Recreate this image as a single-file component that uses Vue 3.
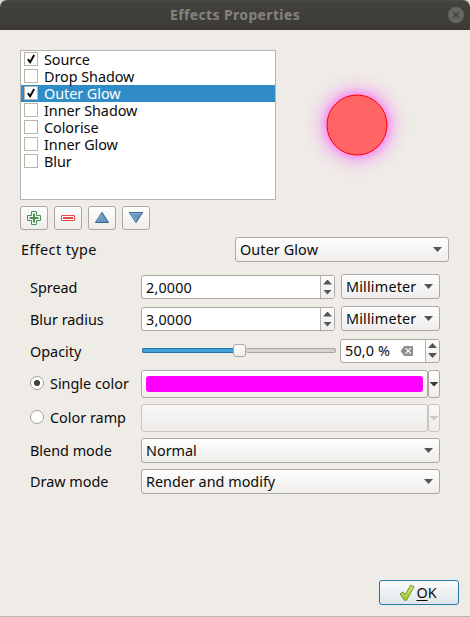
<script setup>
import { ref } from 'vue'

const effects = ref([
  { name: 'Source', on: true },
  { name: 'Drop Shadow', on: false },
  { name: 'Outer Glow', on: true, selected: true },
  { name: 'Inner Shadow', on: false },
  { name: 'Colorise', on: false },
  { name: 'Inner Glow', on: false },
  { name: 'Blur', on: false }
])
const lengths = [
  { label: 'Spread', value: '2,0000', unit: 'Millimeter' },
  { label: 'Blur radius', value: '3,0000', unit: 'Millimeter' }
]
const modes = [
  { label: 'Blend mode', value: 'Normal' },
  { label: 'Draw mode', value: 'Render and modify' }
]
</script>

<template>
  <div class="window">
    <header class="titlebar">
      <span class="title">Effects Properties</span>
      <svg class="close" width="16" height="16" viewBox="0 0 16 16">
        <circle cx="8" cy="8" r="8" fill="#66655f" />
        <path d="M5.2 5.2l5.6 5.6M10.8 5.2l-5.6 5.6" stroke="#3b3a36" stroke-width="1.3" />
      </svg>
    </header>

    <section class="top">
      <ul class="list">
        <li v-for="e in effects" :key="e.name" :class="{ selected: e.selected }">
          <span class="check">
            <svg v-if="e.on" width="12" height="12" viewBox="0 0 12 12">
              <path d="M2.8 6.1l2.3 3.1L9.2 2" fill="none" stroke="#000" stroke-width="1.9" />
            </svg>
          </span>
          <span>{{ e.name }}</span>
        </li>
      </ul>
      <svg class="preview" width="120" height="120" viewBox="0 0 120 120">
        <defs>
          <radialGradient id="glow">
            <stop offset="0.53" stop-color="#ff00ff" stop-opacity="0.42" />
            <stop offset="0.6" stop-color="#ff00ff" stop-opacity="0.28" />
            <stop offset="0.7" stop-color="#ff00ff" stop-opacity="0.12" />
            <stop offset="0.82" stop-color="#ff00ff" stop-opacity="0.035" />
            <stop offset="1" stop-color="#ff00ff" stop-opacity="0" />
          </radialGradient>
        </defs>
        <circle cx="60" cy="60" r="54" fill="url(#glow)" />
        <circle cx="60" cy="60" r="30" fill="#ff6565" stroke="#ff0000" />
      </svg>
    </section>

    <nav class="tools">
      <button class="tool">
        <svg width="16" height="16" viewBox="0 0 16 16">
          <path d="M5.5 1.5h5v4h4v5h-4v4h-5v-4h-4v-5h4z" fill="#f4faf4" stroke="#4f8f56" />
          <path d="M8 3.5v9M3.5 8h9" stroke="#4f8f56" stroke-width="2" />
        </svg>
      </button>
      <button class="tool">
        <svg width="16" height="16" viewBox="0 0 16 16">
          <path d="M1.5 5.5h13v5h-13z" fill="#fff" stroke="#ee4848" />
          <path d="M3 8h10" stroke="#ee4848" stroke-width="2" />
        </svg>
      </button>
      <button class="tool">
        <svg width="16" height="16" viewBox="0 0 16 16">
          <path d="M8 2.3L14.5 12.5h-13z" fill="#6795c5" stroke="#355f88" />
          <path d="M8 3.6L3 11.6" stroke="#9dbddd" stroke-width=".8" />
        </svg>
      </button>
      <button class="tool">
        <svg width="16" height="16" viewBox="0 0 16 16">
          <path d="M8 12.7L14.5 2.5h-13z" fill="#6795c5" stroke="#355f88" />
          <path d="M3 3.4h10M3 3.4l5 8" fill="none" stroke="#9dbddd" stroke-width=".8" />
        </svg>
      </button>
    </nav>

    <div class="type-row">
      <label class="type-label">Effect type</label>
      <div class="combo type-combo"><span>Outer Glow</span><i class="down"></i></div>
    </div>

    <section class="form">
      <div v-for="l in lengths" :key="l.label" class="row length">
        <label>{{ l.label }}</label>
        <div class="spin">
          <span class="value">{{ l.value }}</span>
          <span class="steps"><i class="up"></i><i class="down"></i></span>
        </div>
        <div class="combo unit"><span>{{ l.unit }}</span><i class="down"></i></div>
      </div>

      <div class="row opacity">
        <label>Opacity</label>
        <div class="slider">
          <span class="filled"></span><span class="handle"></span><span class="rest"></span>
        </div>
        <div class="spin percent">
          <span class="value">50,0 %</span>
          <svg class="clear" width="14" height="12" viewBox="0 0 14 12">
            <path d="M4.2 1H13v10H4.2L.6 6z" fill="#8f8f8d" />
            <path d="M5.5 3.2l5.4 5.4M10.9 3.2L5.5 8.6" stroke="#fff" stroke-width="1.2" />
          </svg>
          <span class="steps"><i class="up"></i><i class="down"></i></span>
        </div>
      </div>

      <div class="row color">
        <label class="choice"><span class="radio on"></span>Single color</label>
        <div class="well"><span class="swatch"></span></div>
        <div class="drop"><i class="down big"></i></div>
      </div>
      <div class="row color ramp">
        <label class="choice"><span class="radio"></span>Color ramp</label>
        <div class="well"></div>
        <div class="drop"><i class="down big"></i></div>
      </div>

      <div v-for="m in modes" :key="m.label" class="row mode">
        <label>{{ m.label }}</label>
        <div class="combo wide"><span>{{ m.value }}</span><i class="down"></i></div>
      </div>
    </section>

    <footer class="footer">
      <button class="ok">
        <svg width="16" height="18" viewBox="0 0 16 18">
          <defs>
            <linearGradient id="tick" x1="0" y1="0" x2="0" y2="1">
              <stop offset="0" stop-color="#d3e86c" />
              <stop offset="1" stop-color="#9fca32" />
            </linearGradient>
          </defs>
          <path d="M1 9.8l3.1-1.9 2 2.9L11.6 1.2l3.4 1.5L7.6 16.2H5.4z" fill="url(#tick)" stroke="#6b8f2a" stroke-width=".9" stroke-linejoin="round" />
        </svg>
        <span><span class="mnemonic">O</span>K</span>
      </button>
    </footer>
  </div>
</template>

<style>
body {
  margin: 0;
  background: #d5d3d0;
}
</style>

<style scoped>
* {
  box-sizing: border-box;
}
.window {
  width: 470px;
  height: 617px;
  display: flex;
  flex-direction: column;
  background: #efebe7;
  border-bottom: 1px solid #bab8b5;
  border-radius: 7px 7px 0 0;
  overflow: hidden;
  color: #0b0b0b;
  font: 14.4px/17px "Noto Sans", "Open Sans", sans-serif;
  white-space: nowrap;
}
.titlebar {
  flex: none;
  height: 30px;
  display: flex;
  align-items: center;
  padding: 0 6px 2px 170px;
  background: linear-gradient(#4b4a45, #42413c 3px, #3b3a36);
}
.title {
  color: #85837c;
  font-size: 14px;
  font-weight: 700;
  letter-spacing: 0.36px;
}
.close {
  margin: 2px 0 0 auto;
}
.top {
  flex: none;
  display: flex;
  padding: 20px 0 0 20px;
}
.list {
  width: 256px;
  height: 150px;
  margin: 0;
  padding: 0;
  list-style: none;
  background: #fff;
  border: 1px solid #b6b4b1;
}
.list li {
  display: flex;
  height: 17px;
  padding-left: 3px;
  gap: 6px;
  letter-spacing: -0.05px;
}
.list li.selected {
  background: #308cc6;
  color: #fff;
}
.check {
  width: 14px;
  height: 14px;
  margin-top: 1px;
  border: 1px solid #b8b5b2;
  background: #fff;
  display: flex;
}
.preview {
  margin: 15px 0 0 21px;
}
.tools {
  flex: none;
  display: flex;
  gap: 6px;
  padding: 6px 0 0 20px;
}
.tool,
.combo,
.well,
.drop {
  border: 1px solid #aaa7a4;
  border-radius: 3px;
  background: linear-gradient(#fefefe, #eeedeb);
}
.tool {
  width: 28px;
  height: 24px;
  padding: 0;
  display: flex;
  align-items: center;
  justify-content: center;
}
.type-row {
  flex: none;
  display: flex;
  align-items: center;
  padding: 7px 0 0 21px;
}
.type-label {
  width: 214px;
  letter-spacing: 0.4px;
}
.combo {
  height: 25px;
  display: flex;
  align-items: center;
  justify-content: space-between;
  padding: 0 6px 0 4px;
}
.type-combo {
  width: 214px;
  letter-spacing: 0.1px;
}
.down,
.up {
  width: 9px;
  height: 5px;
  background: #555;
  clip-path: polygon(0 0, 100% 0, 50% 100%);
}
.up {
  clip-path: polygon(50% 0, 100% 100%, 0 100%);
}
.form {
  display: flex;
  flex-direction: column;
  padding: 12px 0 0 30px;
}
.row {
  display: flex;
  align-items: center;
  height: 25px;
}
.row > label {
  flex: none;
  width: 111px;
}
.length {
  margin-bottom: 7px;
}
.length > label {
  padding-top: 1px;
}
.spin {
  width: 194px;
  height: 24px;
  display: flex;
  align-items: center;
  border: 1px solid #aaa7a4;
  border-radius: 3px;
  background: #fff;
  overflow: hidden;
}
.length .spin {
  margin: 1px 6px 0 0;
}
.value {
  flex: 1;
  padding-left: 4px;
  letter-spacing: 0.15px;
}
.steps {
  width: 14px;
  height: 22px;
  border-left: 1px solid #b4b1ae;
  background: linear-gradient(#fdfdfd, #efeeec);
  display: flex;
  flex-direction: column;
  align-items: center;
  justify-content: center;
  gap: 5px;
}
.unit {
  width: 99px;
  letter-spacing: 0.17px;
}
.wide {
  width: 299px;
}
.opacity > label {
  padding-top: 1px;
}
.slider {
  display: flex;
  align-items: center;
  width: 194px;
  margin: 0 4px 0 1px;
}
.filled,
.rest {
  height: 5px;
  border: 1px solid #aaa7a4;
  border-radius: 2px;
  background: #d5d3d0;
}
.filled {
  width: 91px;
  border-color: #2274a5;
  border-right: 0;
  background: #3fa0dc;
  border-radius: 2px 0 0 2px;
}
.rest {
  flex: 1;
  border-left: 0;
}
.handle {
  width: 13px;
  height: 13px;
  border: 1px solid #a8a5a2;
  border-radius: 3px;
  background: linear-gradient(#fff, #efeeec);
}
.percent {
  width: 100px;
}
.clear {
  margin-right: 11px;
}
.color {
  height: 28px;
  margin-top: 7px;
}
.ramp {
  margin-top: 6px;
}
.choice {
  display: flex;
  align-items: center;
  gap: 6px;
  padding-bottom: 2px;
}
.radio {
  width: 14px;
  height: 14px;
  border: 1px solid #a5a29f;
  border-radius: 50%;
  background: #fff;
}
.radio.on {
  background: radial-gradient(circle, #424242 2.7px, #fff 3.4px);
}
.well {
  width: 287px;
  height: 28px;
  padding: 5px 4px;
}
.swatch {
  display: block;
  height: 16px;
  border-radius: 3px;
  background: #ff00ff;
}
.drop {
  width: 12px;
  height: 28px;
  display: flex;
  align-items: center;
  justify-content: center;
}
.big {
  flex: none;
  width: 10px;
  height: 5px;
  background: #3b3b3b;
}
.ramp .well,
.ramp .drop {
  border-color: #c8c5c2;
  background: linear-gradient(#f9f8f7, #eeebe8);
}
.ramp .big {
  background: #cac8c6;
}
.mode {
  margin-top: 6px;
}
.footer {
  margin-top: auto;
  display: flex;
  justify-content: flex-end;
  padding: 0 11px 11px 0;
}
.ok {
  width: 80px;
  height: 25px;
  padding: 0 2px 0 0;
  display: flex;
  align-items: center;
  justify-content: center;
  gap: 1px;
  border: 1px solid #2577a8;
  border-radius: 3px;
  background: linear-gradient(#fcfdfe, #dfe5e9);
  color: inherit;
  font: inherit;
}
.mnemonic {
  text-decoration: underline;
  text-decoration-thickness: 1px;
  text-underline-offset: 2px;
}
</style>
